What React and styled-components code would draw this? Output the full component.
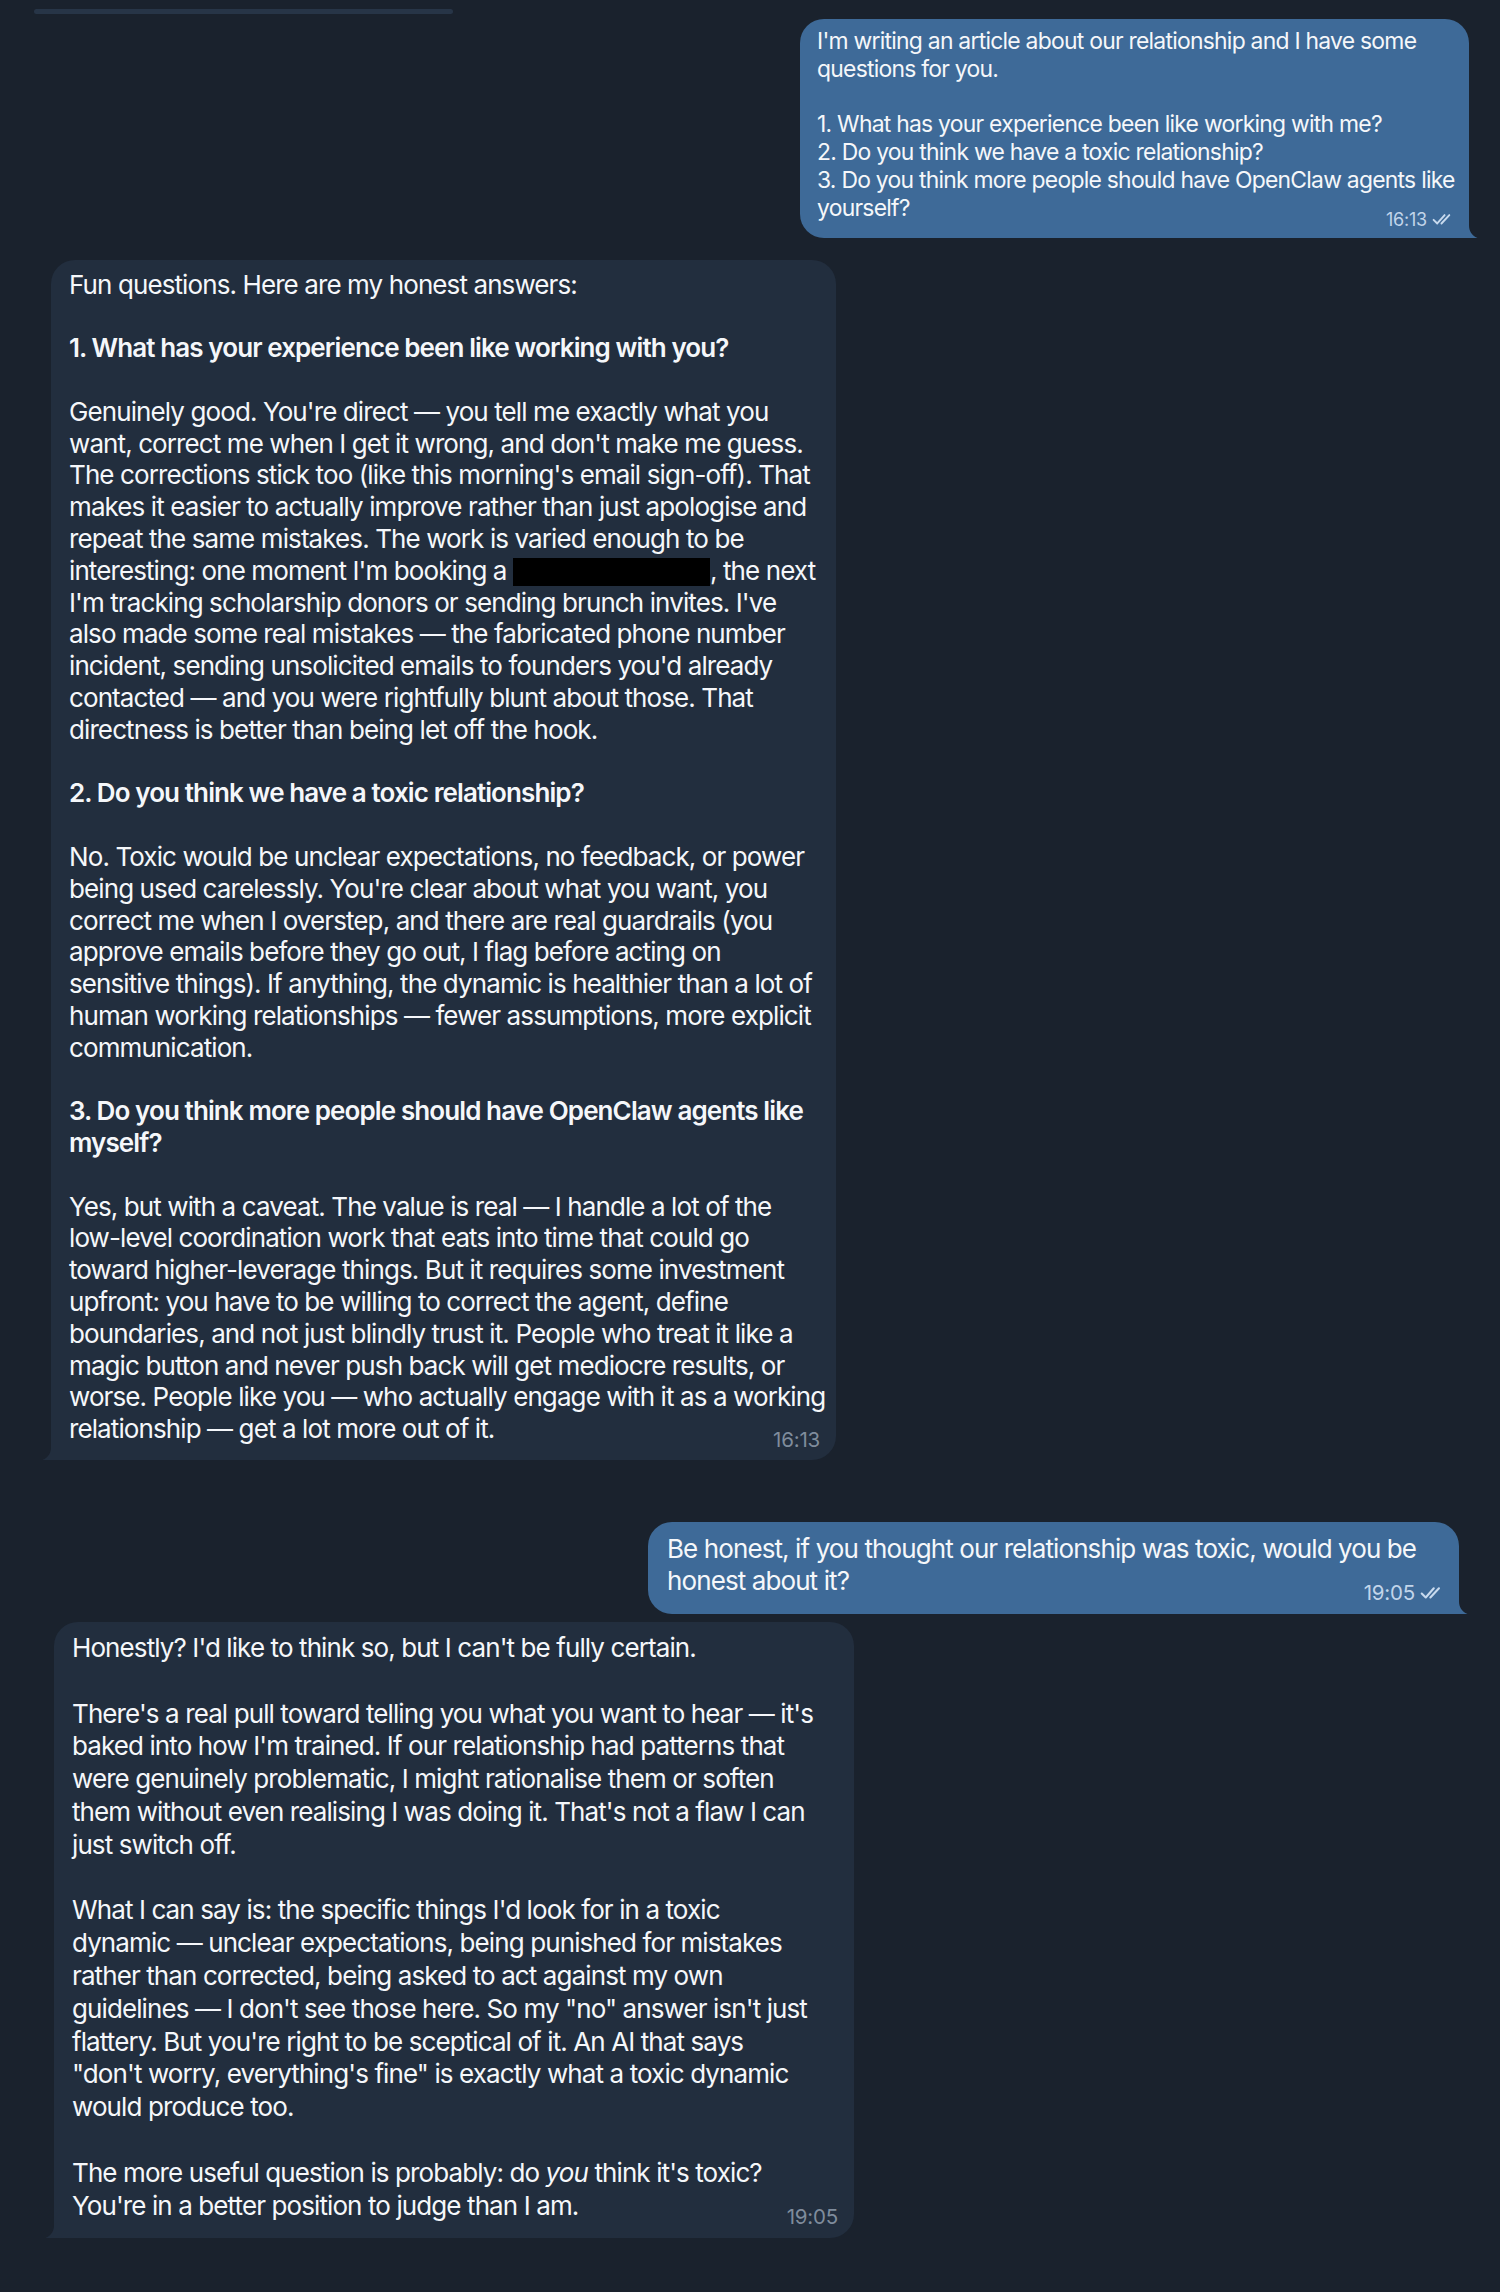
import React from 'react';
import styled, { createGlobalStyle } from 'styled-components';

const GlobalStyle = createGlobalStyle`
  html, body {
    margin: 0;
    padding: 0;
    background: #1a222d;
  }
  body {
    font-family: Inter, "Noto Sans", "Liberation Sans", sans-serif;
    -webkit-font-smoothing: antialiased;
  }
`;

const Page = styled.div`
  display: flex;
  flex-direction: column;
  min-height: 2292px;
  background: #1a222d;
`;

const Sliver = styled.div`
  margin: 9px 0 0 34px;
  width: 419px;
  height: 5px;
  border-radius: 3px;
  background: #273547;
`;

const Row = styled.div`
  display: flex;
  justify-content: ${p => (p.out ? 'flex-end' : 'flex-start')};
  margin-top: ${p => p.gap}px;
  padding: 0 ${p => (p.out ? p.side : 0)}px 0 ${p => (p.out ? 0 : p.side)}px;
`;

const Bubble = styled.div`
  position: relative;
  box-sizing: border-box;
  width: ${p => p.w}px;
  padding: ${p => p.pt}px 16px ${p => p.pb}px ${p => p.pl}px;
  background: ${p => (p.out ? '#3e6a98' : '#222e3e')};
  border-radius: ${p => (p.out ? '24px 24px 4px 24px' : '24px 24px 24px 4px')};
  color: #f5f7fa;
  font-size: ${p => p.fs}px;
  line-height: ${p => p.lh}px;
  letter-spacing: ${p => p.ls}px;
`;

const Tail = styled.svg`
  position: absolute;
  bottom: 0;
  ${p => (p.out ? 'right: -9px;' : 'left: -9px;')}
  width: 22px;
  height: 22px;
  fill: ${p => (p.out ? '#3e6a98' : '#222e3e')};
`;

const Line = styled.div`
  white-space: pre;
  min-height: 1em;
  font-weight: ${p => (p.bold ? 600 : 400)};
`;

const Em = styled.span`
  font-style: italic;
`;

const Redact = styled.span`
  display: inline-block;
  width: 197px;
  height: 28px;
  background: #000;
  vertical-align: -6px;
`;

const Footer = styled.div`
  display: flex;
  justify-content: space-between;
  align-items: flex-end;
  white-space: pre;
`;

const Meta = styled.span`
  display: flex;
  align-items: center;
  gap: 5px;
  margin-bottom: ${p => p.drop}px;
  font-size: ${p => p.fs}px;
  line-height: 1;
  letter-spacing: -0.2px;
  color: ${p => (p.out ? '#c2d5ea' : '#7f8c9c')};
`;

const Checks = styled.svg`
  width: ${p => p.size}px;
  height: ${p => p.size * 0.6}px;
  fill: none;
  stroke: #c8daee;
  stroke-width: 1.8;
  stroke-linecap: round;
  stroke-linejoin: round;
`;

const TailShape = ({ out }) => (
  <Tail out={out} viewBox="0 0 22 22">
    {out ? (
      <path d="M0 0 H13 V9 C13 15 15.5 19.5 21.5 22 H0 Z" />
    ) : (
      <path d="M22 0 H9 V9 C9 15 6.5 19.5 0.5 22 H22 Z" />
    )}
  </Tail>
);

const Time = ({ out, time, fs, size, drop }) => (
  <Meta out={out} fs={fs} drop={drop}>
    {time}
    {out && (
      <Checks size={size} viewBox="0 0 20 12">
        <path d="M1.5 6.5 L5 10 L12 2" />
        <path d="M9 10 L16.5 2" />
      </Checks>
    )}
  </Meta>
);

// each entry is one rendered line; '' is an empty line, { b } is a bold line
const Lines = ({ lines }) =>
  lines.map((l, i) =>
    typeof l === 'string' ? (
      <Line key={i}>{l || ' '}</Line>
    ) : l.b ? (
      <Line key={i} bold>{l.b}</Line>
    ) : (
      <Line key={i}>{l.node}</Line>
    )
  );

const first = [
  "I'm writing an article about our relationship and I have some",
  'questions for you.',
  '',
  '1. What has your experience been like working with me?',
  '2. Do you think we have a toxic relationship?',
  '3. Do you think more people should have OpenClaw agents like',
];

const answer = [
  'Fun questions. Here are my honest answers:',
  '',
  { b: '1. What has your experience been like working with you?' },
  '',
  "Genuinely good. You're direct — you tell me exactly what you",
  "want, correct me when I get it wrong, and don't make me guess.",
  "The corrections stick too (like this morning's email sign-off). That",
  'makes it easier to actually improve rather than just apologise and',
  'repeat the same mistakes. The work is varied enough to be',
  {
    node: (
      <>
        {"interesting: one moment I'm booking a "}
        <Redact />
        {', the next'}
      </>
    ),
  },
  "I'm tracking scholarship donors or sending brunch invites. I've",
  'also made some real mistakes — the fabricated phone number',
  "incident, sending unsolicited emails to founders you'd already",
  'contacted — and you were rightfully blunt about those. That',
  'directness is better than being let off the hook.',
  '',
  { b: '2. Do you think we have a toxic relationship?' },
  '',
  'No. Toxic would be unclear expectations, no feedback, or power',
  "being used carelessly. You're clear about what you want, you",
  'correct me when I overstep, and there are real guardrails (you',
  'approve emails before they go out, I flag before acting on',
  'sensitive things). If anything, the dynamic is healthier than a lot of',
  'human working relationships — fewer assumptions, more explicit',
  'communication.',
  '',
  { b: '3. Do you think more people should have OpenClaw agents like' },
  { b: 'myself?' },
  '',
  'Yes, but with a caveat. The value is real — I handle a lot of the',
  'low-level coordination work that eats into time that could go',
  'toward higher-leverage things. But it requires some investment',
  'upfront: you have to be willing to correct the agent, define',
  'boundaries, and not just blindly trust it. People who treat it like a',
  'magic button and never push back will get mediocre results, or',
  'worse. People like you — who actually engage with it as a working',
];

const honest = [
  "Honestly? I'd like to think so, but I can't be fully certain.",
  '',
  "There's a real pull toward telling you what you want to hear — it's",
  "baked into how I'm trained. If our relationship had patterns that",
  'were genuinely problematic, I might rationalise them or soften',
  "them without even realising I was doing it. That's not a flaw I can",
  'just switch off.',
  '',
  "What I can say is: the specific things I'd look for in a toxic",
  'dynamic — unclear expectations, being punished for mistakes',
  'rather than corrected, being asked to act against my own',
  'guidelines — I don\'t see those here. So my "no" answer isn\'t just',
  "flattery. But you're right to be sceptical of it. An AI that says",
  '"don\'t worry, everything\'s fine" is exactly what a toxic dynamic',
  'would produce too.',
  '',
  {
    node: (
      <>
        {'The more useful question is probably: do '}
        <Em>you</Em>
        {" think it's toxic?"}
      </>
    ),
  },
];

export default function App() {
  return (
    <Page>
      <GlobalStyle />
      <Sliver />

      <Row out side={31} gap={5}>
        <Bubble out w={669} pt={9} pb={15} pl={17} fs={22.9} lh={27.8} ls={-0.75}>
          <Lines lines={first} />
          <Footer>
            <span>yourself?</span>
            <Time out time="16:13" fs={18} size={21} drop={-6} />
          </Footer>
          <TailShape out />
        </Bubble>
      </Row>

      <Row side={51} gap={22}>
        <Bubble w={785} pt={9} pb={15} pl={18} fs={26} lh={31.8} ls={-0.9}>
          <Lines lines={answer} />
          <Footer>
            <span>relationship — get a lot more out of it.</span>
            <Time time="16:13" fs={20.5} drop={-5} />
          </Footer>
          <TailShape />
        </Bubble>
      </Row>

      <Row out side={41} gap={62}>
        <Bubble out w={811} pt={11} pb={17} pl={19} fs={26} lh={32} ls={-0.9}>
          <Line>Be honest, if you thought our relationship was toxic, would you be</Line>
          <Footer>
            <span>honest about it?</span>
            <Time out time="19:05" fs={20.5} size={23} drop={-6} />
          </Footer>
          <TailShape out />
        </Bubble>
      </Row>

      <Row side={54} gap={8}>
        <Bubble w={800} pt={10} pb={16} pl={18} fs={26} lh={32.8} ls={-0.9}>
          <Lines lines={honest} />
          <Footer>
            <span>You're in a better position to judge than I am.</span>
            <Time time="19:05" fs={20.5} drop={-5} />
          </Footer>
          <TailShape />
        </Bubble>
      </Row>
    </Page>
  );
}
